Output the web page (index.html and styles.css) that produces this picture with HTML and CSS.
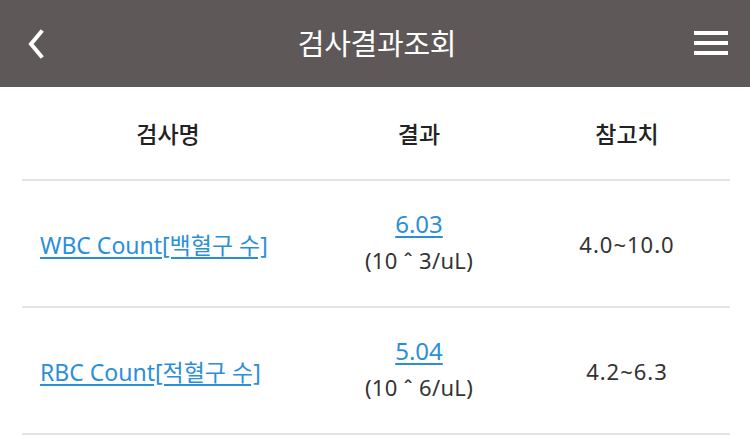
FILE: index.html
```html
<!DOCTYPE html>
<html lang="ko">
<head>
    <meta charset="UTF-8">
    <meta name="viewport" content="width=device-width, initial-scale=1.0">
    <title>검사결과조회</title>
    <link rel="stylesheet" href="styles.css">
</head>
<body>
    <header class="topbar">
        <a class="back" href="#">
            <svg width="20" height="30" viewBox="0 0 20 30">
                <path d="M15 3 L5 15 L15 27" fill="none" stroke="#fff" stroke-width="4" stroke-linecap="square"/>
            </svg>
        </a>
        <h1 class="title">검사결과조회</h1>
        <a class="menu" href="#">
            <span></span>
            <span></span>
            <span></span>
        </a>
    </header>

    <table class="results">
        <colgroup>
            <col class="col-name">
            <col class="col-result">
            <col class="col-ref">
        </colgroup>
        <thead>
            <tr>
                <th>검사명</th>
                <th>결과</th>
                <th>참고치</th>
            </tr>
        </thead>
        <tbody>
            <tr>
                <td class="name"><a href="#">WBC Count[백혈구 수]</a></td>
                <td>
                    <a class="value" href="#">6.03</a>
                    <div class="unit">(10 ˆ 3/uL)</div>
                </td>
                <td class="ref">4.0~10.0</td>
            </tr>
            <tr>
                <td class="name"><a href="#">RBC Count[적혈구 수]</a></td>
                <td>
                    <a class="value" href="#">5.04</a>
                    <div class="unit">(10 ˆ 6/uL)</div>
                </td>
                <td class="ref">4.2~6.3</td>
            </tr>
        </tbody>
    </table>
</body>
</html>
```

FILE: styles.css
```css
body {
    margin: 0;
    background-color: #fff;
    font-family: "Noto Sans", "Noto Sans CJK KR", sans-serif;
    color: #222;
}
.topbar {
    height: 87px;
    background-color: #5e5958;
    display: grid;
    grid-template-columns: 1fr auto 1fr;
    align-items: center;
    padding: 0 22px 0 26px;
}
.back {
    display: flex;
    align-items: center;
}
.title {
    margin: 0;
    color: #fff;
    font-family: "Noto Sans CJK KR", sans-serif;
    font-size: 29px;
    font-weight: 400;
    letter-spacing: -0.3px;
    padding-bottom: 4px;
}
.menu {
    justify-self: end;
    display: flex;
    flex-direction: column;
    gap: 6px;
    width: 34px;
    margin-bottom: 2px;
}
.menu span {
    height: 4px;
    background-color: #fff;
}
.results {
    width: 708px;
    margin-left: 22px;
    border-collapse: collapse;
    table-layout: fixed;
    text-align: center;
}
.col-name {
    width: 292px;
}
.col-result {
    width: 210px;
}
.results th,
.results td {
    border-bottom: 2px solid #e4e4e4;
    padding: 0;
    vertical-align: middle;
}
.results th {
    height: 92px;
    font-family: "Noto Sans CJK KR", sans-serif;
    font-size: 23px;
    font-weight: 500;
    color: #222;
}
.results td {
    height: 125px;
    font-size: 22px;
    color: #333;
}
.results td.name {
    text-align: left;
    padding-left: 18px;
}
.results a {
    color: #2b8fd8;
    text-decoration: underline;
    text-underline-offset: 3px;
}
.results td.name a {
    font-size: 23px;
}
.value {
    display: inline-block;
    font-size: 24px;
    line-height: 36px;
    margin-top: -4px;
}
.unit {
    line-height: 36px;
    letter-spacing: 0.3px;
}
.ref {
    letter-spacing: 1px;
}
```
